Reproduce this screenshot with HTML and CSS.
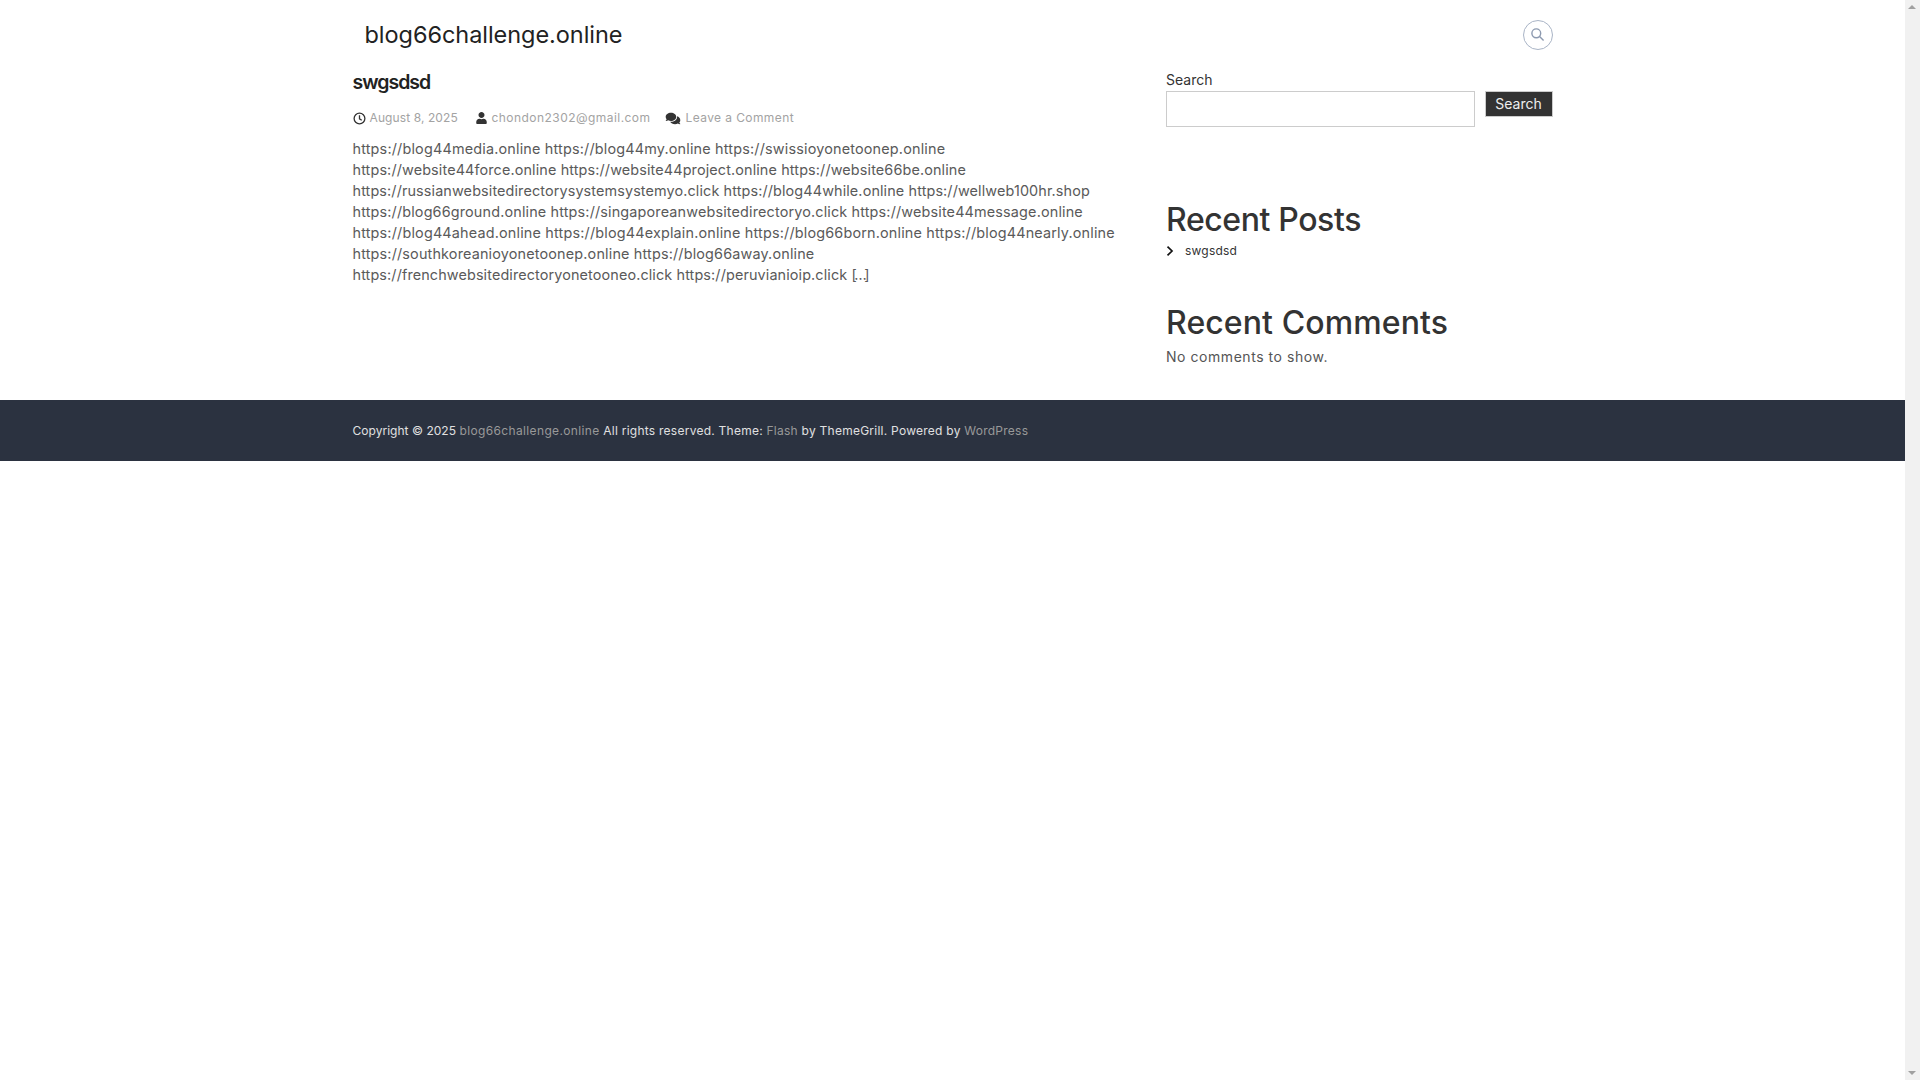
FILE: index.html
```html
<!DOCTYPE html>
<html lang="en">
<head>
<meta charset="utf-8">
<title>blog66challenge.online</title>
<link rel="stylesheet" href="styles.css">
</head>
<body>
<div class="viewport">
  <div class="page">
    <header class="site-header">
      <div class="container header-inner">
        <a class="site-title">blog66challenge.online</a>
        <button class="search-toggle" aria-label="Search">
          <svg class="search-icon" viewBox="0 0 16 16"><circle cx="6.7" cy="6.7" r="4.7"/><path d="M10.2 10.2 14.5 14.5"/></svg>
        </button>
      </div>
    </header>
    <div class="container content">
      <main class="primary">
        <h1 class="post-title">swgsdsd</h1>
        <div class="meta">
          <span class="meta-item meta-date">
            <svg class="icon-clock" viewBox="0 0 14 14"><circle cx="7" cy="7" r="5.8"/><path d="M7 3.6V7.3L9.4 8.9"/></svg>
            <span>August 8, 2025</span>
          </span>
          <span class="meta-item meta-author">
            <svg class="icon-solid" viewBox="0 0 448 512"><path d="M224 256c70.7 0 128-57.3 128-128S294.7 0 224 0 96 57.3 96 128s57.3 128 128 128zm89.6 32h-16.7c-22.2 10.2-46.9 16-72.9 16s-50.6-5.8-72.9-16h-16.7C60.2 288 0 348.2 0 422.4V464c0 26.5 21.5 48 48 48h352c26.5 0 48-21.5 48-48v-41.6c0-74.2-60.2-134.4-134.4-134.4z"/></svg>
            <span>chondon2302@gmail.com</span>
          </span>
          <span class="meta-item meta-comment">
            <svg class="icon-solid icon-comments" viewBox="0 0 576 512"><path d="M416 192c0-88.4-93.1-160-208-160S0 103.6 0 192c0 34.3 14.1 65.9 38 92-13.4 30.2-35.5 54.2-35.8 54.5-2.2 2.3-2.8 5.7-1.5 8.7S4.8 352 8 352c36.6 0 66.9-12.3 88.7-25 32.2 15.7 70.3 25 111.3 25 114.9 0 208-71.6 208-160zm122 220c23.9-26 38-57.7 38-92 0-66.9-53.5-124.2-129.3-148.1.9 6.6 1.3 13.3 1.3 20.1 0 105.9-107.7 192-240 192-10.8 0-21.3-.8-31.7-1.9C207.8 439.6 281.8 480 368 480c41 0 79.1-9.2 111.3-25 21.8 12.7 52.1 25 88.7 25 3.2 0 6.1-1.9 7.3-4.8 1.3-2.9.7-6.3-1.5-8.7-.3-.3-22.4-24.2-35.8-54.5z"/></svg>
            <span>Leave a Comment</span>
          </span>
        </div>
        <p class="excerpt">
          <span class="line line-1">https://blog44media.online https://blog44my.online https://swissioyonetoonep.online</span>
          <span class="line line-2">https://website44force.online https://website44project.online https://website66be.online</span>
          <span class="line line-3">https://russianwebsitedirectorysystemsystemyo.click https://blog44while.online https://wellweb100hr.shop</span>
          <span class="line line-4">https://blog66ground.online https://singaporeanwebsitedirectoryo.click https://website44message.online</span>
          <span class="line line-5">https://blog44ahead.online https://blog44explain.online https://blog66born.online https://blog44nearly.online</span>
          <span class="line line-6">https://southkoreanioyonetoonep.online https://blog66away.online</span>
          <span class="line line-7">https://frenchwebsitedirectoryonetooneo.click https://peruvianioip.click <span class="more">[…]</span></span>
        </p>
      </main>
      <aside class="sidebar">
        <section class="widget-search">
          <label class="search-label">Search</label>
          <div class="search-row">
            <input class="search-input" type="text">
            <button class="search-button">Search</button>
          </div>
        </section>
        <section class="widget-posts">
          <h2 class="widget-title title-posts">Recent Posts</h2>
          <div class="post-link">
            <svg class="icon-chevron" viewBox="0 0 8 10"><path d="M1.5 .7 6 5 1.5 9.3"/></svg>
            <a>swgsdsd</a>
          </div>
        </section>
        <section class="widget-comments">
          <h2 class="widget-title title-comments">Recent Comments</h2>
          <p class="no-comments">No comments to show.</p>
        </section>
      </aside>
    </div>
    <footer class="site-footer">
      <div class="container footer-inner"><span class="copy">Copyright © 2025 </span><a class="site-link">blog66challenge.online</a> All rights reserved. Theme: <a>Flash</a> by ThemeGrill. Powered by <a>WordPress</a></div>
    </footer>
  </div>
  <div class="scrollbar">
    <span class="arrow-up"></span>
    <span class="arrow-down"></span>
  </div>
</div>
</body>
</html>
```
FILE: styles.css
```css
* { box-sizing: border-box; }
html, body { margin: 0; height: 100%; overflow: hidden; }
body { font-family: Inter, "Noto Sans", sans-serif; color: #555; background: #fff; }
.viewport { display: flex; height: 1080px; }
.page { flex: 1; min-width: 0; }
.container { width: 1200px; margin: 0 auto; }

.site-header { height: 69px; }
.header-inner { height: 69px; display: flex; align-items: center; justify-content: space-between; padding-left: 12px; }
.site-title { font-size: 23.5px; font-weight: 400; color: #222; white-space: nowrap; letter-spacing: -0.05px; }
.search-toggle { width: 30px; height: 30px; padding: 0; border: 1px solid #a9b4c6; border-radius: 50%; background: #fff; display: flex; align-items: center; justify-content: center; }
.search-icon { width: 15px; height: 15px; fill: none; stroke: #8d9ab0; stroke-width: 1.5; }

.content { display: flex; justify-content: space-between; height: 331px; }
.primary { width: 780px; }
.post-title { margin: 0; font-size: 19.5px; line-height: 26px; font-weight: 600; color: #222; letter-spacing: -1px; }
.meta { display: flex; margin-top: 15px; font-size: 12px; line-height: 16px; color: #a3a3a3; }
.meta-item { display: flex; align-items: center; white-space: nowrap; }
.meta-date { width: 123px; gap: 4px; letter-spacing: 0.1px; }
.meta-author { width: 189px; gap: 5px; letter-spacing: 0.45px; }
.meta-comment { gap: 5px; letter-spacing: 0.4px; }
.icon-clock { width: 13px; height: 13px; fill: none; stroke: #333; stroke-width: 1.4; }
.icon-solid { width: 11px; height: 12px; fill: #333; }
.icon-comments { width: 16px; height: 13px; }
.excerpt { margin: 12px 0 0; font-size: 14.4px; line-height: 21px; color: #5a5a5a; white-space: nowrap; }
.line { display: block; }
.line-1 { letter-spacing: 0.182px; }
.line-2 { letter-spacing: 0.127px; }
.line-3 { letter-spacing: 0.12px; }
.line-4 { letter-spacing: 0.155px; }
.line-5 { letter-spacing: 0.178px; }
.line-6 { letter-spacing: 0.167px; }
.line-7 { letter-spacing: 0.12px; }
.more { letter-spacing: -2.5px; }

.sidebar { width: 386.5px; }
.widget-search { height: 59px; padding-top: 1px; }
.search-label { display: block; font-size: 14px; line-height: 20px; margin-bottom: 1px; color: #333; }
.search-row { display: flex; align-items: flex-start; gap: 10px; }
.search-input { width: 309px; height: 36px; border: 1px solid #ccc; background: #fff; padding: 0; }
.search-button { width: 68px; height: 26px; padding: 0 0 2px; background: #333; color: #eee; border: 1px solid #ccc; font: 14px Inter, sans-serif; }
.widget-posts { margin-top: 74px; height: 103px; }
.widget-title { margin: 0; font-size: 32px; line-height: 36px; font-weight: 500; color: #333; }
.title-posts { letter-spacing: -0.4px; }
.title-comments { letter-spacing: 0.1px; }
.post-link { display: flex; align-items: center; gap: 11px; margin-top: 5px; font-size: 12px; line-height: 16px; color: #333; letter-spacing: 0.2px; }
.icon-chevron { width: 8px; height: 10px; fill: none; stroke: #111; stroke-width: 1.7; }
.no-comments { margin: 6px 0 0; font-size: 14px; line-height: 20px; color: #555; letter-spacing: 0.55px; }

.site-footer { height: 61px; background: #2b3240; }
.footer-inner { height: 61px; display: flex; align-items: center; white-space: pre; font-size: 12px; color: #e0e0e0; letter-spacing: 0.25px; }
.footer-inner a { color: #999; }
.footer-inner .copy { letter-spacing: 0.03px; }
.footer-inner .site-link { letter-spacing: 0.36px; }

.scrollbar { position: relative; width: 15px; height: 1080px; background: #f1f1f1; }
.arrow-up, .arrow-down { position: absolute; left: 3px; width: 0; height: 0; border-left: 4px solid transparent; border-right: 4px solid transparent; }
.arrow-up { top: 5px; border-bottom: 4px solid #a0a0a0; }
.arrow-down { bottom: 5px; border-top: 4px solid #a0a0a0; }
```
